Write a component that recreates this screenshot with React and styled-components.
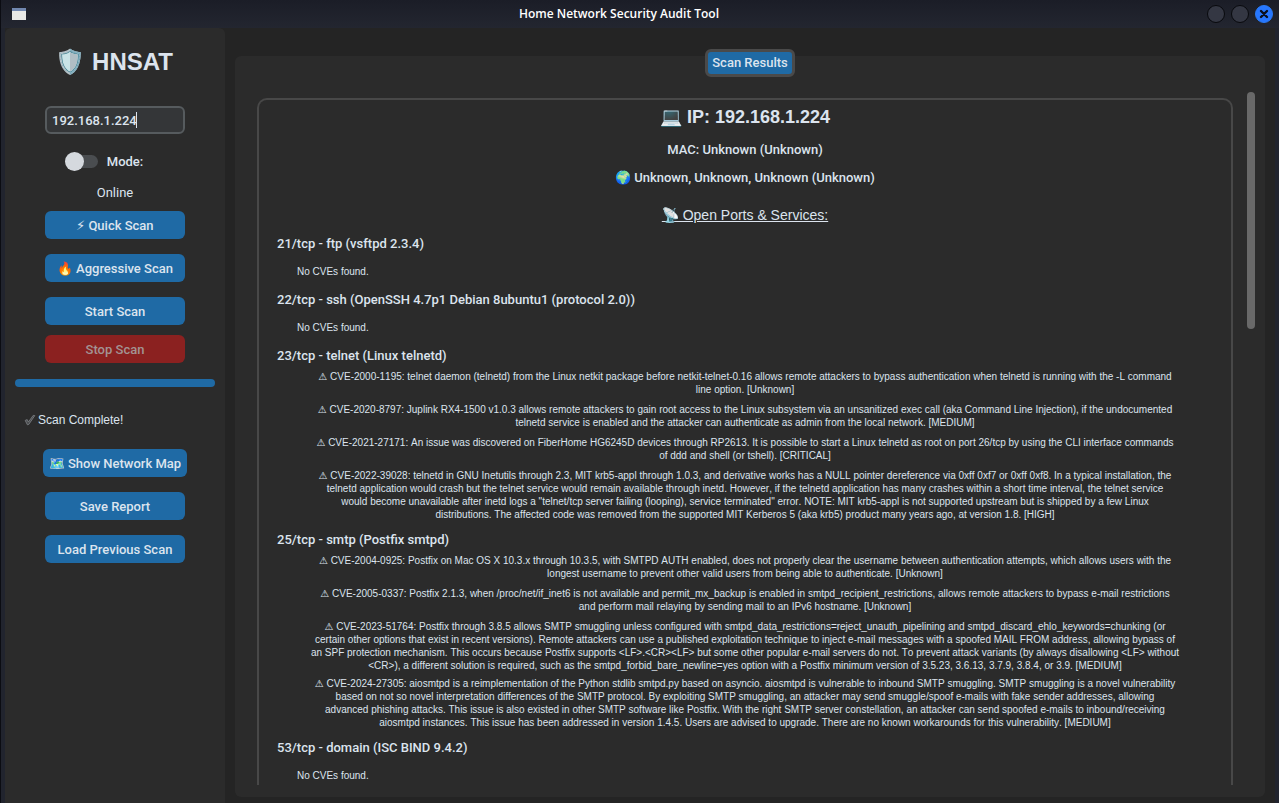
import React from "react";
import styled, { createGlobalStyle } from "styled-components";

const Global = createGlobalStyle`
  * { box-sizing: border-box; }
  html, body { margin: 0; height: 100%; background: #242424; }
  body { font-family: Roboto, "Liberation Sans", sans-serif; font-size: 13px; color: #dce4ee; }
  #root { height: 100%; }
  h1, h2, h3, p { margin: 0; }
`;

const Window = styled.div`
  display: flex;
  flex-direction: column;
  height: 100vh;
  border-left: 1px solid #0b0c12;
  background: #21242e;
  overflow: hidden;
`;

const TitleBar = styled.header`
  display: grid;
  grid-template-columns: 80px 1fr 126px;
  align-items: center;
  flex: none;
  height: 28px;
  padding: 0 6px 0 10px;
  background: linear-gradient(#1b1d27, #232630);
`;

const WindowTitle = styled.h1`
  font-family: "Open Sans", "Noto Sans", sans-serif;
  font-size: 12px;
  font-weight: 600;
  line-height: 16px;
  text-align: center;
  color: #ffffff;
`;

const WindowButtons = styled.div`
  display: flex;
  justify-content: flex-end;
  gap: 6px;
`;

const WindowButton = styled.button`
  display: grid;
  place-items: center;
  width: 18px;
  height: 18px;
  padding: 0;
  border: 1px solid ${(p) => (p.$close ? "#2a7af5" : "#08090d")};
  border-radius: 50%;
  background: ${(p) => (p.$close ? "#2777ff" : "#343743")};
`;

const Body = styled.div`
  display: flex;
  flex: 1;
  min-height: 0;
  gap: 10px;
  margin: 0 4px;
  padding-right: 10px;
  background: #242424;
`;

const Sidebar = styled.aside`
  display: flex;
  flex-direction: column;
  align-items: center;
  flex: none;
  width: 220px;
  padding: 18px 10px;
  border-radius: 6px 6px 0 0;
  background: #2b2b2b;
`;

const Brand = styled.h2`
  display: flex;
  align-items: center;
  gap: 7px;
  height: 32px;
  margin-bottom: 28px;
  padding-right: 2px;
  font-family: "Liberation Sans", Arial, sans-serif;
  font-size: 24px;
  font-weight: 700;
`;

const IpField = styled.div`
  position: relative;
  height: 28px;
`;

const IpInput = styled.input`
  display: block;
  width: 140px;
  height: 28px;
  padding: 0 5px;
  border: 2px solid #565b5e;
  border-radius: 6px;
  background: #343638;
  color: #dce4ee;
  caret-color: transparent;
  font: 500 13px Roboto, sans-serif;
  outline: none;
`;

const Caret = styled.span`
  position: absolute;
  top: 6px;
  left: 91px;
  width: 1px;
  height: 16px;
  background: #dce4ee;
  pointer-events: none;
`;

const SwitchRow = styled.label`
  display: flex;
  align-items: center;
  gap: 9px;
  height: 28px;
  margin: 13px 0 8px;
  padding-right: 22px;
  font-weight: 500;
`;

const Switch = styled.input`
  appearance: none;
  width: 33px;
  height: 13px;
  margin: 0;
  border-radius: 7px;
  background: #4a4d50;
  &::before {
    content: "";
    display: block;
    width: 19px;
    height: 19px;
    margin: -3px 0;
    border-radius: 50%;
    background: #d5d9de;
  }
`;

const SideText = styled.p`
  height: 20px;
  line-height: 20px;
  margin-bottom: 8px;
  font-weight: 400;
`;

const ActionButton = styled.button`
  display: flex;
  align-items: center;
  justify-content: center;
  gap: 3px;
  flex: none;
  width: ${(p) => (p.$wide ? 144 : 140)}px;
  height: 28px;
  margin-bottom: ${(p) => (p.$tight ? 10 : 15)}px;
  padding: 0;
  border: 0;
  border-radius: 6px;
  background: ${(p) => (p.$danger ? "#8b2120" : "#1f6aa5")};
  color: ${(p) => (p.$danger ? "#a39393" : "#dce4ee")};
  font: 500 13px Roboto, sans-serif;
  white-space: nowrap;
`;

const Progress = styled.div`
  flex: none;
  align-self: stretch;
  height: 8px;
  margin: 1px 0 23px;
  border-radius: 4px;
  background: #1f6aa5;
`;

const Status = styled.p`
  display: flex;
  align-items: center;
  align-self: stretch;
  gap: 2px;
  height: 20px;
  margin-bottom: 19px;
  padding-left: 9px;
  font: 400 12px "Liberation Sans", Arial, sans-serif;
`;

const Main = styled.main`
  display: flex;
  flex-direction: column;
  flex: 1;
  min-width: 0;
  margin: 28px 0 6px;
  border-radius: 6px;
  background: #2b2b2b;
`;

const TabStrip = styled.nav`
  display: flex;
  justify-content: center;
  height: 28px;
  margin-top: -7px;
`;

const Tab = styled.button`
  height: 28px;
  padding: 0 4px;
  border: 3px solid #4a4a4a;
  border-radius: 6px;
  background: #1f6aa5;
  color: #dce4ee;
  font: 500 13px/20px Roboto, sans-serif;
`;

const ScrollArea = styled.div`
  display: flex;
  flex: 1;
  min-height: 0;
  gap: 14px;
  margin: 15px 10px 12px 22px;
`;

const ResultCard = styled.section`
  flex: 1;
  min-width: 0;
  margin-top: 6px;
  padding: 3px 18px 0;
  border: 2px solid #484848;
  border-bottom: 0;
  border-radius: 10px 10px 0 0;
  overflow: hidden;
`;

const ScrollThumb = styled.div`
  width: 8px;
  height: 237px;
  border-radius: 4px;
  background: #696969;
`;

const HostTitle = styled.h2`
  display: flex;
  justify-content: center;
  align-items: center;
  gap: 5px;
  height: 28px;
  margin-bottom: 4px;
  font: 700 18px "Liberation Sans", Arial, sans-serif;
`;

const HostLine = styled.p`
  display: flex;
  justify-content: center;
  align-items: center;
  gap: 3px;
  height: 28px;
  font-weight: 500;
`;

const SectionTitle = styled.h3`
  display: flex;
  justify-content: center;
  align-items: center;
  height: 28px;
  margin: 10px 0 1px;
  font: 400 14px "Liberation Sans", Arial, sans-serif;
  text-decoration: underline;
`;

const PortTitle = styled.h3`
  height: 28px;
  font: 500 13px/28px Roboto, sans-serif;
`;

const NoCves = styled.p`
  height: 28px;
  padding-left: 20px;
  font: 400 10px/28px "Liberation Sans", Arial, sans-serif;
`;

const CveList = styled.div`
  padding: 0 20px;
`;

const Cve = styled.div`
  display: flex;
  flex-direction: column;
  align-items: center;
  min-height: 33px;
  padding-bottom: 5px;
  overflow: hidden;
  font: 400 10px/13px "Liberation Sans", "DejaVu Sans", sans-serif;
  font-kerning: none;
  white-space: nowrap;
`;

const ports = [
  { title: "21/tcp - ftp (vsftpd 2.3.4)", cves: [] },
  { title: "22/tcp - ssh (OpenSSH 4.7p1 Debian 8ubuntu1 (protocol 2.0))", cves: [] },
  {
    title: "23/tcp - telnet (Linux telnetd)",
    cves: [
      [
        "⚠ CVE-2000-1195: telnet daemon (telnetd) from the Linux netkit package before netkit-telnet-0.16 allows remote attackers to bypass authentication when telnetd is running with the -L command",
        "line option. [Unknown]",
      ],
      [
        "⚠ CVE-2020-8797: Juplink RX4-1500 v1.0.3 allows remote attackers to gain root access to the Linux subsystem via an unsanitized exec call (aka Command Line Injection), if the undocumented",
        "telnetd service is enabled and the attacker can authenticate as admin from the local network. [MEDIUM]",
      ],
      [
        "⚠ CVE-2021-27171: An issue was discovered on FiberHome HG6245D devices through RP2613. It is possible to start a Linux telnetd as root on port 26/tcp by using the CLI interface commands",
        "of ddd and shell (or tshell). [CRITICAL]",
      ],
      [
        "⚠ CVE-2022-39028: telnetd in GNU Inetutils through 2.3, MIT krb5-appl through 1.0.3, and derivative works has a NULL pointer dereference via 0xff 0xf7 or 0xff 0xf8. In a typical installation, the",
        "telnetd application would crash but the telnet service would remain available through inetd. However, if the telnetd application has many crashes within a short time interval, the telnet service",
        "would become unavailable after inetd logs a \"telnet/tcp server failing (looping), service terminated\" error. NOTE: MIT krb5-appl is not supported upstream but is shipped by a few Linux",
        "distributions. The affected code was removed from the supported MIT Kerberos 5 (aka krb5) product many years ago, at version 1.8. [HIGH]",
      ],
    ],
  },
  {
    title: "25/tcp - smtp (Postfix smtpd)",
    cves: [
      [
        "⚠ CVE-2004-0925: Postfix on Mac OS X 10.3.x through 10.3.5, with SMTPD AUTH enabled, does not properly clear the username between authentication attempts, which allows users with the",
        "longest username to prevent other valid users from being able to authenticate. [Unknown]",
      ],
      [
        "⚠ CVE-2005-0337: Postfix 2.1.3, when /proc/net/if_inet6 is not available and permit_mx_backup is enabled in smtpd_recipient_restrictions, allows remote attackers to bypass e-mail restrictions",
        "and perform mail relaying by sending mail to an IPv6 hostname. [Unknown]",
      ],
      [
        "⚠ CVE-2023-51764: Postfix through 3.8.5 allows SMTP smuggling unless configured with smtpd_data_restrictions=reject_unauth_pipelining and smtpd_discard_ehlo_keywords=chunking (or",
        "certain other options that exist in recent versions). Remote attackers can use a published exploitation technique to inject e-mail messages with a spoofed MAIL FROM address, allowing bypass of",
        "an SPF protection mechanism. This occurs because Postfix supports <LF>.<CR><LF> but some other popular e-mail servers do not. To prevent attack variants (by always disallowing <LF> without",
        "<CR>), a different solution is required, such as the smtpd_forbid_bare_newline=yes option with a Postfix minimum version of 3.5.23, 3.6.13, 3.7.9, 3.8.4, or 3.9. [MEDIUM]",
      ],
      [
        "⚠ CVE-2024-27305: aiosmtpd is a reimplementation of the Python stdlib smtpd.py based on asyncio. aiosmtpd is vulnerable to inbound SMTP smuggling. SMTP smuggling is a novel vulnerability",
        "based on not so novel interpretation differences of the SMTP protocol. By exploiting SMTP smuggling, an attacker may send smuggle/spoof e-mails with fake sender addresses, allowing",
        "advanced phishing attacks. This issue is also existed in other SMTP software like Postfix. With the right SMTP server constellation, an attacker can send spoofed e-mails to inbound/receiving",
        "aiosmtpd instances. This issue has been addressed in version 1.4.5. Users are advised to upgrade. There are no known workarounds for this vulnerability. [MEDIUM]",
      ],
    ],
  },
  { title: "53/tcp - domain (ISC BIND 9.4.2)", cves: [] },
];

export default function App() {
  return (
    <>
      <Global />
      <Window>
        <TitleBar>
          <svg width="16" height="14" viewBox="0 0 16 14" aria-hidden="true">
            <rect x="1" y="1" width="14" height="12" fill="#e9e9e6" />
            <rect x="1" y="1" width="14" height="3" fill="#7288b0" />
          </svg>
          <WindowTitle>Home Network Security Audit Tool</WindowTitle>
          <WindowButtons>
            <WindowButton aria-label="Minimize" />
            <WindowButton aria-label="Maximize" />
            <WindowButton $close aria-label="Close">
              <svg width="10" height="10" viewBox="0 0 10 10">
                <path d="M2 2L8 8M8 2L2 8" stroke="#0a0f1c" strokeWidth="2.4" strokeLinecap="round" />
              </svg>
            </WindowButton>
          </WindowButtons>
        </TitleBar>
        <Body>
          <Sidebar>
            <Brand><span>🛡️</span>HNSAT</Brand>
            <IpField>
              <IpInput aria-label="Target IP" defaultValue="192.168.1.224" />
              <Caret />
            </IpField>
            <SwitchRow><Switch type="checkbox" role="switch" />Mode:</SwitchRow>
            <SideText>Online</SideText>
            <ActionButton><span>⚡︎</span>Quick Scan</ActionButton>
            <ActionButton><span>🔥</span>Aggressive Scan</ActionButton>
            <ActionButton $tight>Start Scan</ActionButton>
            <ActionButton $danger disabled>Stop Scan</ActionButton>
            <Progress role="progressbar" aria-valuenow={100} aria-label="Scan progress" />
            <Status>
              <svg width="12" height="12" viewBox="0 0 12 12" aria-hidden="true">
                <path d="M1.2 6.4L3.2 5.6L4.4 8L9.2 1.4L10.8 1.6L4.8 10.4L3.4 10.8Z" fill="#4b4d4f" stroke="#7d8286" strokeWidth="0.8" strokeLinejoin="round" />
              </svg>
              Scan Complete!
            </Status>
            <ActionButton $wide><span>🗺️</span>Show Network Map</ActionButton>
            <ActionButton>Save Report</ActionButton>
            <ActionButton>Load Previous Scan</ActionButton>
          </Sidebar>
          <Main>
            <TabStrip><Tab>Scan Results</Tab></TabStrip>
            <ScrollArea>
              <ResultCard>
                <HostTitle><span>💻</span>IP: 192.168.1.224</HostTitle>
                <HostLine>MAC: Unknown (Unknown)</HostLine>
                <HostLine><span>🌍</span>Unknown, Unknown, Unknown (Unknown)</HostLine>
                <SectionTitle>📡 Open Ports &amp; Services:</SectionTitle>
                {ports.map((port) => (
                  <React.Fragment key={port.title}>
                    <PortTitle>{port.title}</PortTitle>
                    {port.cves.length === 0 && <NoCves>No CVEs found.</NoCves>}
                    <CveList>
                      {port.cves.map((lines) => (
                        <Cve key={lines[0]}>
                          {lines.map((line) => <span key={line}>{line}</span>)}
                        </Cve>
                      ))}
                    </CveList>
                  </React.Fragment>
                ))}
              </ResultCard>
              <ScrollThumb />
            </ScrollArea>
          </Main>
        </Body>
      </Window>
    </>
  );
}
